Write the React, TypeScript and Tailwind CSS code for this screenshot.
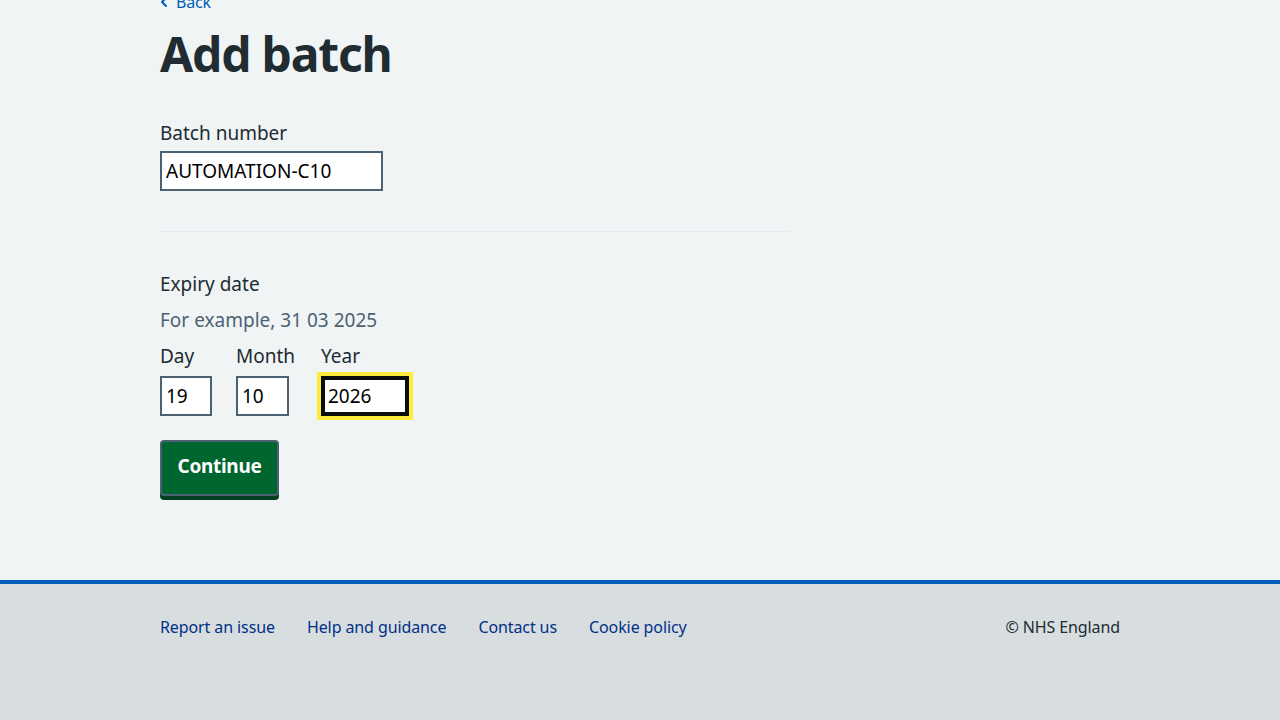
import { ChevronLeft } from "lucide-react";

const font = { fontFamily: '"Noto Sans", "Open Sans", sans-serif' };

function DateField({
  label,
  value,
  width,
  boxWidth = "",
  focused,
}: {
  label: string;
  value: string;
  width: string;
  boxWidth?: string;
  focused?: boolean;
}) {
  return (
    <div className={`flex flex-col items-start ${boxWidth}`}>
      <label className="text-[19px] leading-[28px] text-[#212b32] mb-[6px]">{label}</label>
      <input
        readOnly
        value={value}
        className={
          focused
            ? `${width} h-10 border-4 border-[#0b0c0c] bg-white px-[3px] text-[19px] text-black outline-4 outline-solid outline-[#ffeb3b]`
            : `${width} h-10 border-2 border-[#4c6272] bg-white px-1 text-[19px] text-black outline-none`
        }
      />
    </div>
  );
}

export default function App() {
  return (
    <div className="min-h-screen bg-[#f0f4f5] text-[#212b32] flex flex-col overflow-hidden" style={font}>
      <main className="w-[960px] mx-auto -mt-[10px] pb-20">
        {/* Back link */}
        <a href="#" className="flex items-center text-[16px] leading-6 text-[#005eb8] tracking-[-0.2px]">
          <ChevronLeft size={16} strokeWidth={3} className="-ml-1" />
          <span className="ml-1">Back</span>
        </a>

        <h1 className="text-[48px] leading-[56px] font-bold mt-[12px] mb-[37px] tracking-[-1.2px]">Add batch</h1>

        {/* Batch number */}
        <div className="flex flex-col">
          <label className="text-[19px] leading-[28px] mb-1">Batch number</label>
          <input
            readOnly
            value="AUTOMATION-C10"
            className="w-[223px] h-10 border-2 border-[#4c6272] bg-white px-1 text-[19px] text-black outline-none"
          />
        </div>

        <hr className="w-[630px] border-t border-[#e4e9eb] mt-10 mb-[38px]" />

        {/* Expiry date */}
        <fieldset>
          <legend className="text-[19px] leading-[28px] mb-2">Expiry date</legend>
          <div className="text-[19px] leading-[28px] text-[#4c6272] mb-2">For example, 31 03 2025</div>
          <div className="flex gap-6">
            <DateField label="Day" value="19" width="w-[52px]" />
            <DateField label="Month" value="10" width="w-[53px]" boxWidth="w-[61px]" />
            <DateField label="Year" value="2026" width="w-[88px]" focused />
          </div>
        </fieldset>

        <button className="mt-6 h-[56px] w-[119px] rounded border-2 border-[#4c6272] bg-[#00662f] text-white text-[19px] font-bold tracking-[-0.3px] pb-1 shadow-[0_4px_0_#00401e]">
          Continue
        </button>
      </main>

      <footer className="mt-auto border-t-4 border-[#005eb8] bg-[#d8dde0] h-[140px]">
        <div className="w-[960px] mx-auto flex items-center justify-between pt-[31px] tracking-[-0.1px]">
          <ul className="flex gap-8 text-[16px] text-[#003087]">
            <li><a href="#">Report an issue</a></li>
            <li><a href="#">Help and guidance</a></li>
            <li><a href="#">Contact us</a></li>
            <li><a href="#">Cookie policy</a></li>
          </ul>
          <p className="text-[16px] text-[#212b32]">© NHS England</p>
        </div>
      </footer>
    </div>
  );
}
